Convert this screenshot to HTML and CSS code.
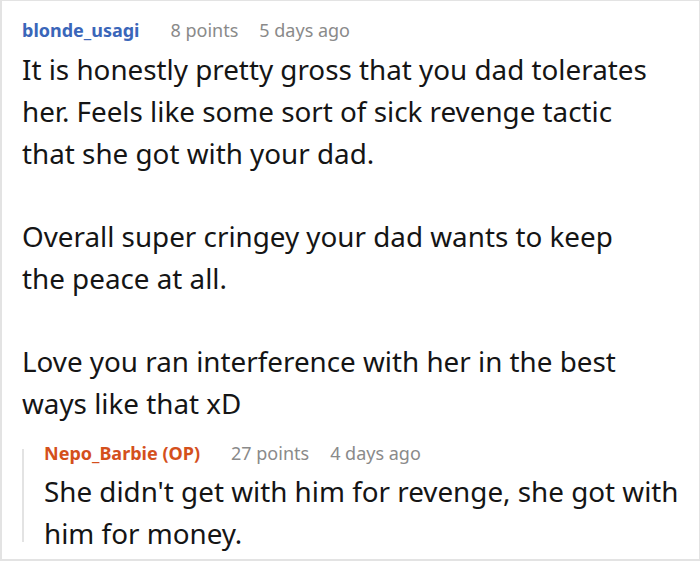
FILE: index.html
```html
<!DOCTYPE html>
<html>
<head>
<meta charset="utf-8">
<link rel="stylesheet" href="styles.css">
</head>
<body>
<div class="thread">
  <div class="comment">
    <div class="meta">
      <span class="author">blonde_usagi</span>
      <span class="info">8 points</span>
      <span class="info">5 days ago</span>
    </div>
    <div class="body">
      <p>It is honestly pretty gross that you dad tolerates her. Feels like some sort of sick revenge tactic that she got with your dad.</p>
      <p>Overall super cringey your dad wants to keep the peace at all.</p>
      <p>Love you ran interference with her in the best ways like that xD</p>
    </div>
    <div class="reply">
      <div class="meta">
        <span class="author op">Nepo_Barbie (OP)</span>
        <span class="info">27 points</span>
        <span class="info">4 days ago</span>
      </div>
      <div class="body">
        <p>She didn't get with him for revenge, she got with him for money.</p>
      </div>
    </div>
  </div>
</div>
</body>
</html>
```
FILE: styles.css
```css
html, body {
  margin: 0;
  padding: 0;
  background: #fff;
}
body {
  font-family: "Noto Sans", "Open Sans", sans-serif;
  color: #151515;
}
.thread {
  width: 700px;
  height: 561px;
  box-sizing: border-box;
  border: 1px solid #e3e3e3;
  border-left-width: 2px;
  border-bottom-width: 2px;
  overflow: hidden;
}
.comment {
  padding: 17px 0 0 20px;
}
.meta {
  display: flex;
  align-items: baseline;
  gap: 21px;
  font-size: 18px;
  line-height: 24px;
}
.author {
  font-weight: 700;
  color: #3a66b9;
  margin-right: 10px;
}
.author.op {
  color: #d4501c;
}
.info {
  color: #8a8a8a;
}
.body {
  width: 640px;
  font-size: 27.8px;
  line-height: 41.75px;
  margin-top: 7px;
}
.body p {
  margin: 0 0 41.75px 0;
}
.body p:last-child {
  margin-bottom: 0;
}
.reply {
  position: relative;
  margin-top: 16px;
  padding-left: 22px;
}
.reply::before {
  content: "";
  position: absolute;
  left: 0;
  top: 8px;
  bottom: 12px;
  width: 2px;
  background: #e3e3e3;
}
.reply .body {
  margin-top: 6px;
}
```
